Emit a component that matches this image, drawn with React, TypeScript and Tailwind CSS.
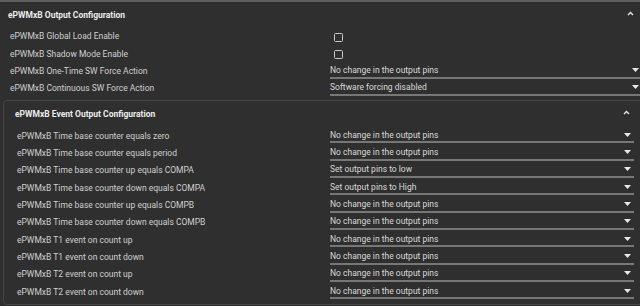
import React from "react";

const outerRows: { label: string; kind: "check" | "select"; value?: string }[] = [
  { label: "ePWMxB Global Load Enable", kind: "check" },
  { label: "ePWMxB Shadow Mode Enable", kind: "check" },
  { label: "ePWMxB One-Time SW Force Action", kind: "select", value: "No change in the output pins" },
  { label: "ePWMxB Continuous SW Force Action", kind: "select", value: "Software forcing disabled" },
];

const innerRows: [string, string][] = [
  ["ePWMxB Time base counter equals zero", "No change in the output pins"],
  ["ePWMxB Time base counter equals period", "No change in the output pins"],
  ["ePWMxB Time base counter up equals COMPA", "Set output pins to low"],
  ["ePWMxB Time base counter down equals COMPA", "Set output pins to High"],
  ["ePWMxB Time base counter up equals COMPB", "No change in the output pins"],
  ["ePWMxB Time base counter down equals COMPB", "No change in the output pins"],
  ["ePWMxB T1 event on count up", "No change in the output pins"],
  ["ePWMxB T1 event on count down", "No change in the output pins"],
  ["ePWMxB T2 event on count up", "No change in the output pins"],
  ["ePWMxB T2 event on count down", "No change in the output pins"],
];

function ChevronUp() {
  return (
    <svg width="7" height="5" viewBox="0 0 7 5" className="block">
      <path d="M1 4 L3.5 1.5 L6 4" fill="none" stroke="#e6e6e6" strokeWidth="1.4" />
    </svg>
  );
}

function Tri() {
  return (
    <svg width="7" height="4" viewBox="0 0 7 4" className="block">
      <path d="M0 0 H7 L3.5 4 Z" fill="#e8e8e8" />
    </svg>
  );
}

function Select({ value, w, tri }: { value: string; w: string; tri: string }) {
  return (
    <div className={`${w} h-[15px] flex items-center justify-between border-b-2 border-[#777777] self-start mt-[1px]`}>
      <span className="text-[8.5px] text-[#d9d9d9] leading-none">{value}</span>
      <span className={tri}>
        <Tri />
      </span>
    </div>
  );
}

function Checkbox() {
  return <div className="w-[9px] h-[9px] ml-[4px] mt-[2px] border-[1.5px] border-[#c9c9c9] rounded-[1.5px]" />;
}

export default function App() {
  return (
    <div className="w-[640px] h-[306px] overflow-hidden bg-[#2f2f2f] font-['Roboto',sans-serif]">
      <div className="w-[640px] border-t-2 border-[#5f5f5f]">
        <div className="h-[26px] flex items-center pl-[8px]">
          <span className="text-[8.5px] font-bold text-[#ececec] leading-none">ePWMxB Output Configuration</span>
          <span className="ml-auto mr-[6px] mb-[3px]">
            <ChevronUp />
          </span>
        </div>
        {outerRows.map((r) => (
          <div key={r.label} className="h-[17.33px] flex items-center pl-[10px]">
            <span className="w-[320px] shrink-0 text-[8.5px] text-[#cfcfcf] leading-none">{r.label}</span>
            {r.kind === "check" ? <Checkbox /> : <Select value={r.value!} w="w-[310px]" tri="mr-[1px]" />}
          </div>
        ))}
        <div className="mt-[3px] ml-[3px] w-[650px] border border-[#454545] rounded-[4px] pb-[3px]">
          <div className="h-[26px] flex items-center pl-[11px]">
            <span className="text-[8.5px] font-bold text-[#ececec] leading-none">ePWMxB Event Output Configuration</span>
            <span className="ml-auto mr-[22px] mb-[3px]">
              <ChevronUp />
            </span>
          </div>
          {innerRows.map(([l, v], i) => (
            <div key={i} className="h-[17.33px] flex items-center pl-[13px]">
              <span className="w-[313px] shrink-0 text-[8.5px] text-[#cfcfcf] leading-none">{l}</span>
              <Select value={v} w="w-[304px]" tri="mr-[3px]" />
            </div>
          ))}
        </div>
      </div>
    </div>
  );
}
